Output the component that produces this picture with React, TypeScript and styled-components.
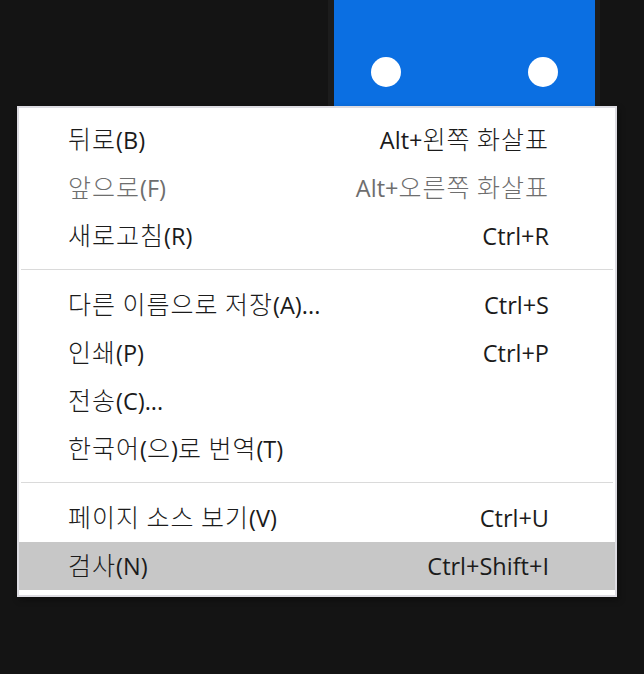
import React from "react";
import styled, { createGlobalStyle } from "styled-components";

const Global = createGlobalStyle`
  html, body { margin: 0; padding: 0; background: #141414; }
  body { font-family: "Open Sans", "Noto Sans CJK KR", sans-serif; }
`;

const Page = styled.div`
  width: 644px;
  height: 674px;
  background: #141414;
  overflow: hidden;
`;

const WindowFrame = styled.div`
  margin-left: 328px;
  width: 272px;
  height: 106px;
  background: #1c1c1c;
  padding: 0 5px 0 6px;
  box-sizing: border-box;
`;

const BlueWindow = styled.div`
  height: 100%;
  background: #0b6fe2;
  display: flex;
  justify-content: space-between;
  align-items: flex-end;
  padding: 0 37px 19px 37px;
  box-sizing: border-box;
`;

const Dot = styled.div`
  width: 30px;
  height: 30px;
  border-radius: 50%;
  background: #ffffff;
`;

const Menu = styled.div`
  margin-left: 17px;
  width: 600px;
  box-sizing: border-box;
  border: 2px solid #dddce2;
  background: #ffffff;
  padding: 8px 0 5px 0;
  box-shadow: 2px 3px 6px rgba(0, 0, 0, 0.35);
`;

const Item = styled.div<{ $disabled?: boolean; $active?: boolean }>`
  display: flex;
  justify-content: space-between;
  align-items: center;
  height: 48px;
  padding: 0 66px 0 49px;
  font-size: 23.5px;
  line-height: 48px;
  color: ${(p) => (p.$disabled ? "#6e6e6e" : "#1b1b1b")};
  background: ${(p) => (p.$active ? "#c7c7c7" : "transparent")};
`;

const Label = styled.span`
  white-space: nowrap;
`;

const Shortcut = styled.span`
  white-space: nowrap;
`;

const Hangul = styled.span`
  font-family: "Noto Sans CJK KR", sans-serif;
  font-size: 25px;
  font-weight: 300;
  line-height: 1;
  letter-spacing: 1px;
`;

const Separator = styled.div`
  height: 1px;
  background: #dadada;
  margin: 9px 2px 11px 2px;
`;

function Text({ value }: { value: string }) {
  const parts = value.split(/([\uAC00-\uD7A3]+(?:\s+[\uAC00-\uD7A3]+)*)/);
  return (
    <>
      {parts.map((p, i) =>
        /[\uAC00-\uD7A3]/.test(p) ? <Hangul key={i}>{p}</Hangul> : <React.Fragment key={i}>{p}</React.Fragment>
      )}
    </>
  );
}

type Entry =
  | { sep: true }
  | { sep?: false; label: string; key?: string; disabled?: boolean; active?: boolean };

const entries: Entry[] = [
  { label: "뒤로(B)", key: "Alt+왼쪽 화살표" },
  { label: "앞으로(F)", key: "Alt+오른쪽 화살표", disabled: true },
  { label: "새로고침(R)", key: "Ctrl+R" },
  { sep: true },
  { label: "다른 이름으로 저장(A)...", key: "Ctrl+S" },
  { label: "인쇄(P)", key: "Ctrl+P" },
  { label: "전송(C)..." },
  { label: "한국어(으)로 번역(T)" },
  { sep: true },
  { label: "페이지 소스 보기(V)", key: "Ctrl+U" },
  { label: "검사(N)", key: "Ctrl+Shift+I", active: true },
];

export default function App() {
  return (
    <Page>
      <Global />
      <WindowFrame>
        <BlueWindow>
          <Dot />
          <Dot />
        </BlueWindow>
      </WindowFrame>
      <Menu>
        {entries.map((e, i) =>
          e.sep ? (
            <Separator key={i} />
          ) : (
            <Item key={i} $disabled={e.disabled} $active={e.active}>
              <Label>
                <Text value={e.label} />
              </Label>
              {e.key ? (
                <Shortcut>
                  <Text value={e.key} />
                </Shortcut>
              ) : null}
            </Item>
          )
        )}
      </Menu>
    </Page>
  );
}
